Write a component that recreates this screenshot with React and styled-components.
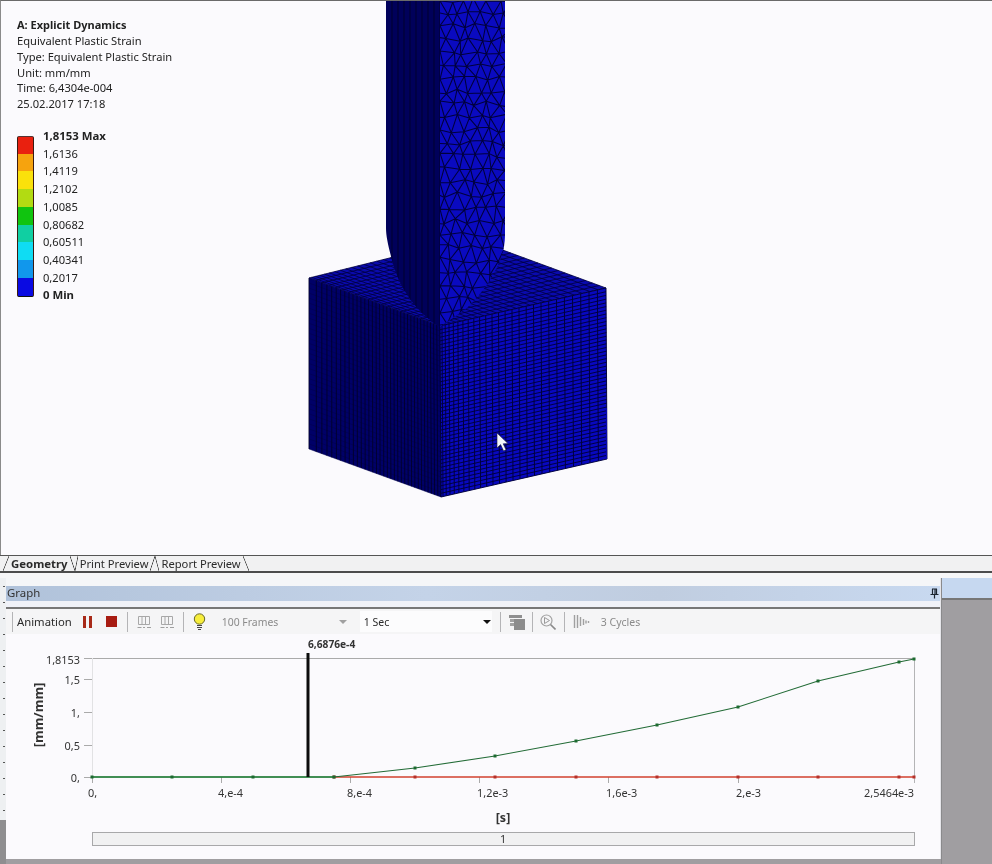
import React from "react";
import styled, { createGlobalStyle } from "styled-components";

const UI_FONT = `"Noto Sans", "Open Sans", sans-serif`;

const GlobalStyle = createGlobalStyle`
  html, body { margin: 0; padding: 0; background: #fbfafd; }
  body { font-family: ${UI_FONT}; }
`;

/* ---------- mesh geometry, in page pixels ---------- */

// small seeded random so the tri mesh stays the same on every load
const seeded = (s) => () => {
  s = (s * 16807) % 2147483647;
  return s / 2147483647;
};

const lerp = (a, b, t) => [a[0] + (b[0] - a[0]) * t, a[1] + (b[1] - a[1]) * t];
const pt = (p) => `${p[0].toFixed(1)} ${p[1].toFixed(1)}`;

// grid lines of a 4 corner face. us, vs are 0..1 stations
const faceGrid = (a, b, c, d, us, vs) => {
  let out = "";
  us.forEach((u) => {
    out += `M${pt(lerp(a, b, u))}L${pt(lerp(d, c, u))}`;
  });
  vs.forEach((v) => {
    out += `M${pt(lerp(a, d, v))}L${pt(lerp(b, c, v))}`;
  });
  return out;
};

const stations = (n, power) =>
  Array.from({ length: n + 1 }, (_, i) => Math.pow(i / n, power));

const TL = [309, 278];
const TB = [470, 238];
const TR = [606, 288];
const TF = [440, 326];
const BL = [309, 449];
const BF = [441, 497];
const BR = [607, 459];

const topLines = faceGrid(TF, TR, TB, TL, stations(26, 1.25), stations(20, 1));
const leftLines = faceGrid(TL, TF, BF, BL, stations(34, 0.82), []);
const leftRows = faceGrid(TL, TF, BF, BL, [], stations(34, 1));
const rightLines = faceGrid(TF, TR, BR, BF, stations(26, 1.35), stations(46, 1));

const rodLeftShape = "M386 1L440 1L440 327C425 318 401 296 392 260C388 245 386 236 386 228Z";
const rodRightShape = "M440 1L505 1L505 235C505 260 490 285 467 308L440 327Z";

const rodLeftLines = Array.from({ length: 9 }, (_, i) => {
  const x = 392 + i * 6;
  return `M${x} 1L${x} 330`;
}).join("");

const buildTriMesh = () => {
  const rnd = seeded(4711);
  const rows = [];
  for (let j = 0; j < 27; j++) {
    const row = [];
    for (let i = -1; i < 8; i++) {
      const shift = j % 2 ? 5.8 : 0;
      const pinned = i === 0 && j % 2 === 0;
      row.push([
        440 + i * 11.7 + shift + (pinned ? 0 : (rnd() - 0.5) * 5.5),
        j * 13 + (rnd() - 0.5) * 6,
      ]);
    }
    rows.push(row);
  }
  let d = "";
  rows.forEach((row, j) => {
    row.forEach((p, i) => {
      if (row[i + 1]) d += `M${pt(p)}L${pt(row[i + 1])}`;
      if (rows[j + 1]) {
        d += `M${pt(p)}L${pt(rows[j + 1][i])}`;
        const other = j % 2 ? rows[j + 1][i + 1] : rows[j + 1][i - 1];
        if (other) d += `M${pt(p)}L${pt(other)}`;
      }
    });
  });
  return d;
};

const triMesh = buildTriMesh();

/* ---------- chart data ---------- */

const xs = [92, 172, 253, 334, 415, 495, 576, 657, 738, 818, 899, 914];
const greenYs = [777, 777, 777, 777, 768, 756, 741, 725, 707, 681, 662, 659];
const greenPath = xs.map((x, i) => `${x},${greenYs[i]}`).join(" ");

const yTicks = [
  { label: "1,8153", y: 658 },
  { label: "1,5", y: 679 },
  { label: "1,", y: 712 },
  { label: "0,5", y: 745 },
  { label: "0,", y: 777 },
];

const xTicks = [
  { label: "0,", x: 92, from: 88 },
  { label: "4,e-4", x: 221, from: 218 },
  { label: "8,e-4", x: 350, from: 347 },
  { label: "1,2e-3", x: 479, from: 477 },
  { label: "1,6e-3", x: 608, from: 606 },
  { label: "2,e-3", x: 738, from: 736 },
];

const legend = [
  { color: "#e9200f", label: "1,8153 Max", strong: true },
  { color: "#f6a30e", label: "1,6136" },
  { color: "#fae10b", label: "1,4119" },
  { color: "#b2db12", label: "1,2102" },
  { color: "#10c40f", label: "1,0085" },
  { color: "#10cfa2", label: "0,80682" },
  { color: "#0fdcf3", label: "0,60511" },
  { color: "#1197ec", label: "0,40341" },
  { color: "#0a0ae2", label: "0,2017" },
  { label: "0 Min", strong: true },
];

/* ---------- page ---------- */

const Page = styled.div`
  width: 992px;
  height: 864px;
  display: flex;
  flex-direction: column;
  overflow: hidden;
  background: #fbfafd;
  color: #222;
  filter: blur(0.3px);
`;

const Viewport = styled.div`
  position: relative;
  height: 555px;
  box-sizing: border-box;
  flex: none;
  padding: 16px 0 0 16px;
  border-top: 1px solid #6a6a6a;
  border-left: 1px solid #8a8a8a;
`;

const MeshCanvas = styled.svg`
  position: absolute;
  left: -1px;
  top: -1px;
`;

const Cursor = styled.svg`
  position: absolute;
  left: 494px;
  top: 430px;
`;

const InfoLine = styled.div`
  font-size: ${(p) => (p.$strong ? 11 : 11.15)}px;
  line-height: 15.85px;
  font-weight: ${(p) => (p.$strong ? 700 : 400)};
  white-space: nowrap;
  position: relative;
`;

const Legend = styled.div`
  position: relative;
  display: grid;
  grid-template-columns: 17px auto;
  grid-auto-rows: 17.7px;
  column-gap: 9px;
  width: 110px;
  margin-top: 24px;
`;

const LegendLabel = styled.div`
  font-size: ${(p) => (p.$strong ? 11.4 : 11.15)}px;
  line-height: 17.7px;
  font-weight: ${(p) => (p.$strong ? 700 : 400)};
  white-space: nowrap;
  grid-column: 2;
  transform: translateY(-9px);
`;

const LegendSwatch = styled.div`
  grid-column: 1;
  background: ${(p) => p.$color};
  border-left: 1px solid #3a1a10;
  border-right: 1px solid #3a1a10;
  border-bottom: ${(p) => (p.$last ? "1px solid #111" : "none")};
  border-top: ${(p) => (p.$first ? "1px solid #533" : "none")};
  border-radius: ${(p) => (p.$first ? "2px 2px 0 0" : p.$last ? "0 0 2px 2px" : "0")};
  margin-bottom: ${(p) => (p.$last ? -2 : 0)}px;
`;

const LegendRow = styled.div`
  display: contents;
`;

/* tabs */

const TabStrip = styled.div`
  height: 18px;
  flex: none;
  box-sizing: border-box;
  display: flex;
  align-items: stretch;
  padding-left: 3px;
  background: #f1f1f2;
  border-top: 1px solid #555;
  border-bottom: 2px solid #4c4c4c;
`;

const TabSlash = styled.span`
  flex: none;
  width: ${(p) => p.$w}px;
  background: linear-gradient(
    ${(p) => (p.$back ? "to top right" : "to top left")},
    transparent calc(50% - 0.7px),
    #444 50%,
    transparent calc(50% + 0.7px)
  );
`;

const Tab = styled.span`
  font-size: ${(p) => (p.$active ? 11.4 : 11.2)}px;
  line-height: 15px;
  padding: 0 2px;
  font-weight: ${(p) => (p.$active ? 700 : 400)};
  color: #2a2a2a;
  white-space: nowrap;
`;

/* lower docked panel */

const Lower = styled.div`
  flex: 1;
  min-height: 0;
  display: flex;
  flex-direction: column;
`;

const Gap = styled.div`
  height: 5px;
  flex: none;
  background: #f6f6f7;
`;

const Dock = styled.div`
  flex: 1;
  display: flex;
  min-height: 0;
  background: #a09ea1;
`;

const Rail = styled.div`
  width: 6px;
  flex: none;
  background:
    repeating-linear-gradient(to bottom, #555 0 1px, transparent 1px 16px) 3px 8px / 2px 234px no-repeat,
    linear-gradient(to bottom, #eef0f2 0 242px, #8f8e90 242px);
`;

const GraphPanel = styled.div`
  width: 934px;
  height: 281px;
  flex: none;
  display: flex;
  flex-direction: column;
  background: #f7f7f9;
  border-right: 1px solid #e6e6ea;
`;

const TitleTop = styled.div`
  height: 8px;
  flex: none;
  background: #f5f6f8;
`;

const TitleBar = styled.div`
  height: 15px;
  flex: none;
  display: flex;
  align-items: center;
  justify-content: space-between;
  padding: 0 1px;
  background: linear-gradient(to right, #b0c2da 0%, #bccce2 25%, #c4d3e8 45%, #c0cde0 70%, #c8d9f0 100%);
  font-size: 11.4px;
  line-height: 13px;
  color: #333;
`;

const TitleLabel = styled.span`
  margin-top: -2px;
`;

const TitleUnder = styled.div`
  height: 6px;
  flex: none;
  background: #f0f2f8;
  border-bottom: 2px solid #777;
`;

const Toolbar = styled.div`
  height: 25px;
  flex: none;
  display: flex;
  align-items: center;
  background: #f5f5f6;
  font-size: 11.5px;
`;

const ToolSep = styled.span`
  flex: none;
  width: 1px;
  height: 20px;
  margin-left: ${(p) => p.$ml}px;
  background: #b4b4b6;
`;

const ToolText = styled.span`
  flex: none;
  margin-left: ${(p) => p.$ml}px;
  font-size: ${(p) => (p.$muted ? 10.5 : 11.3)}px;
  color: ${(p) => (p.$muted ? "#8a8a8a" : "#2a2a2a")};
  white-space: nowrap;
`;

const ToolIcon = styled.svg`
  flex: none;
  display: block;
  margin-left: ${(p) => p.$ml}px;
`;

const FramesBox = styled.div`
  flex: none;
  width: 130px;
  margin-left: 16px;
  display: flex;
  align-items: center;
  justify-content: space-between;
  padding-right: 5px;
  box-sizing: border-box;
  font-size: 10.4px;
  color: #8a8a8a;
`;

const SecBox = styled.div`
  flex: none;
  width: 132px;
  height: 21px;
  margin-left: 8px;
  padding: 0 1px 0 4px;
  box-sizing: border-box;
  display: flex;
  align-items: center;
  justify-content: space-between;
  background: #fcfcfd;
  font-size: 10.5px;
  color: #2a2a2a;
`;

const Caret = styled.span`
  width: 0;
  height: 0;
  border-left: 4px solid transparent;
  border-right: 4px solid transparent;
  border-top: 4px solid ${(p) => p.$color};
`;

const Chart = styled.svg`
  display: block;
  flex: none;
`;

const AxisText = styled.text`
  font-family: ${UI_FONT};
  font-size: ${(p) => p.$size || 10.9}px;
  fill: #333;
  font-weight: ${(p) => (p.$strong ? 700 : 400)};
`;

const SideColumn = styled.div`
  flex: 1;
  display: flex;
  flex-direction: column;
  border-left: 1px solid #8a8a8c;
`;

const SideBlue = styled.div`
  height: 20px;
  flex: none;
  background: #c6d8f0;
  border-bottom: 2px solid #777;
`;

const Mesh = () => (
  <MeshCanvas width="992" height="555" viewBox="0 0 992 555">
    <defs>
      <clipPath id="rodL"><path d={rodLeftShape} /></clipPath>
      <clipPath id="rodR"><path d={rodRightShape} /></clipPath>
    </defs>

    {/* block */}
    <polygon points={[TL, TB, TR, TF].map(pt).join(" ")} fill="#0a0aae" />
    <path d={topLines} stroke="#00003c" strokeWidth="0.8" fill="none" />

    <polygon points={[TL, TF, BF, BL].map(pt).join(" ")} fill="#000068" />
    <path d={leftRows} stroke="#00004a" strokeWidth="0.5" fill="none" />
    <path d={leftLines} stroke="#00002a" strokeWidth="0.9" fill="none" />

    <polygon points={[TF, TR, BR, BF].map(pt).join(" ")} fill="#0808c0" />
    <path d={rightLines} stroke="#00003a" strokeWidth="0.95" fill="none" />
    <rect x="606" y="408" width="1" height="51" fill="#0808a8" />

    {/* rod on top of the block */}
    <path d={rodLeftShape} fill="#00005a" />
    <path d={rodLeftLines} clipPath="url(#rodL)" stroke="#000032" strokeWidth="1.1" fill="none" />
    <path d={rodRightShape} fill="#0a0ac0" />
    <path d={triMesh} clipPath="url(#rodR)" stroke="#00003c" strokeWidth="1.05" fill="none" />
  </MeshCanvas>
);

const Pin = () => (
  <svg width="9" height="11" viewBox="0 0 9 11">
    <path d="M2 1h5M2.5 1v5.5M6.5 1v5.5M5 1v5.5M0.5 6.5h8M4.5 6.5v4" stroke="#1a2430" strokeWidth="1.2" fill="none" />
  </svg>
);

const TableGlyph = ({ ml }) => (
  <ToolIcon $ml={ml} width="15" height="15" viewBox="0 0 15 15">
    <path d="M1.5 2.5h11v8h-11zM5 2.5v8M8.5 2.5v8" fill="none" stroke="#a8a8a8" />
    <path d="M0.5 13.5h4M6 13.5h2M10 13.5h4" stroke="#a0a0a0" />
  </ToolIcon>
);

const GraphChart = () => (
  <Chart width="934" height="225" viewBox="6 634 934 225">
    <rect x="6" y="634" width="934" height="225" fill="#fbfafd" />

    {/* frame */}
    <line x1="84" y1="658.5" x2="914" y2="658.5" stroke="#aaa" />
    <line x1="92.5" y1="658" x2="92.5" y2="783" stroke="#e2e2e4" />
    <line x1="914.5" y1="658" x2="914.5" y2="783" stroke="#b4b4b6" />

    {yTicks.map((t) => (
      <g key={t.label}>
        <line x1="84" y1={t.y + 0.5} x2="92" y2={t.y + 0.5} stroke="#aaa" />
        <AxisText x="80" y={t.y + (t.y === 658 ? 6 : 5)} textAnchor="end">{t.label}</AxisText>
      </g>
    ))}

    {xTicks.map((t) => (
      <g key={t.label}>
        <line x1={t.x + 0.5} y1="777" x2={t.x + 0.5} y2="783" stroke="#aaa" />
        <AxisText x={t.from} y="797">{t.label}</AxisText>
      </g>
    ))}
    <AxisText x="914" y="797" textAnchor="end">2,5464e-3</AxisText>

    <AxisText $strong $size={12.5} x="503" y="822" textAnchor="middle">[s]</AxisText>
    <AxisText $strong $size={13} x="0" y="0" textAnchor="middle" transform="translate(43 715) rotate(-90)">[mm/mm]</AxisText>

    {/* series */}
    <line x1="334" y1="777" x2="914" y2="777" stroke="#d2402e" strokeWidth="1.3" />
    {xs.slice(3).map((x) => (
      <rect key={x} x={x - 1.5} y="775.5" width="3" height="3" fill="#b5302a" />
    ))}
    <line x1="92" y1="777" x2="334" y2="777" stroke="#2c9a44" strokeWidth="1.4" />
    <polyline points={greenPath} fill="none" stroke="#226b36" strokeWidth="1.1" />
    {xs.map((x, i) => (
      <rect key={x} x={x - 1.5} y={greenYs[i] - 1.5} width="3" height="3" fill="#1d6a30" />
    ))}

    {/* time cursor */}
    <rect x="306.5" y="653" width="3" height="124" fill="#0c0c0c" />
    <AxisText $strong $size={10.2} x="308" y="648">6,6876e-4</AxisText>

    {/* frame scrubber */}
    <rect x="92.5" y="832.5" width="822" height="13" fill="#f1f1f2" stroke="#a8a8aa" />
    <AxisText x="503" y="843" textAnchor="middle">1</AxisText>
  </Chart>
);

const App = () => (
  <Page>
    <GlobalStyle />
    <Viewport>
      <Mesh />
      <Cursor width="14" height="22" viewBox="0 0 14 22">
        <path d="M2 2L2 17L5.6 13.6L8.6 20L11 18.8L8.2 12.8L13 12.6Z" fill="#f4f6fa" stroke="#1a1a40" strokeWidth="0.6" />
      </Cursor>
      <InfoLine $strong>A: Explicit Dynamics</InfoLine>
      <InfoLine>Equivalent Plastic Strain</InfoLine>
      <InfoLine>Type: Equivalent Plastic Strain</InfoLine>
      <InfoLine>Unit: mm/mm</InfoLine>
      <InfoLine>Time: 6,4304e-004</InfoLine>
      <InfoLine>25.02.2017 17:18</InfoLine>
      <Legend>
        {legend.map((row, i) => (
          <LegendRow key={row.label}>
            {row.color ? <LegendSwatch $color={row.color} $first={i === 0} $last={i === 8} /> : <span />}
            <LegendLabel $strong={row.strong}>{row.label}</LegendLabel>
          </LegendRow>
        ))}
      </Legend>
    </Viewport>

    <TabStrip>
      <TabSlash $w={6} />
      <Tab $active>Geometry</Tab>
      <TabSlash $w={5} $back />
      <TabSlash $w={3} />
      <Tab>Print Preview</Tab>
      <TabSlash $w={5} />
      <TabSlash $w={4} $back />
      <Tab>Report Preview</Tab>
      <TabSlash $w={6} $back />
    </TabStrip>

    <Lower>
      <Gap />
      <Dock>
        <Rail />
        <GraphPanel>
          <TitleTop />
          <TitleBar>
            <TitleLabel>Graph</TitleLabel>
            <Pin />
          </TitleBar>
          <TitleUnder />
          <Toolbar>
            <ToolSep $ml={6} />
            <ToolText $ml={4}>Animation</ToolText>
            <ToolIcon $ml={11} width="9" height="12" viewBox="0 0 9 12">
              <path d="M0 0h3v12H0zM6 0h3v12H6z" fill="#a82a18" />
            </ToolIcon>
            <ToolIcon $ml={14} width="11" height="11" viewBox="0 0 11 11">
              <rect width="11" height="11" fill="#a81c12" />
            </ToolIcon>
            <ToolSep $ml={10} />
            <TableGlyph ml={9} />
            <TableGlyph ml={8} />
            <ToolSep $ml={8} />
            <ToolIcon $ml={9} width="13" height="17" viewBox="0 0 13 17">
              <circle cx="6.5" cy="6" r="5.2" fill="#f7ee3c" stroke="#6a6a2a" />
              <path d="M4 12h5v1H4zM4 14h5v1H4zM5 16h3v1H5z" fill="#444" />
            </ToolIcon>
            <FramesBox>
              <span>100 Frames</span>
              <Caret $color="#a0a0a0" />
            </FramesBox>
            <SecBox>
              <span>1 Sec</span>
              <Caret $color="#111" />
            </SecBox>
            <ToolSep $ml={8} />
            <ToolIcon $ml={8} width="16" height="16" viewBox="0 0 16 16">
              <path d="M0 1h13v3H0z" fill="#8f8f8f" />
              <path d="M1 5h4v3H1zM1 9h4v3H1z" fill="#a2a2a2" />
              <path d="M5 5h11v11H5z" fill="#8c8c8c" />
            </ToolIcon>
            <ToolSep $ml={7} />
            <ToolIcon $ml={7} width="16" height="16" viewBox="0 0 16 16">
              <circle cx="6.5" cy="6.5" r="5.5" fill="none" stroke="#a2a2a2" strokeWidth="1.2" />
              <path d="M4.5 3.5L9.5 6.5L4.5 9.5Z" fill="none" stroke="#9a9a9a" />
              <path d="M10.5 10.5L15.5 15.5" stroke="#8a8a8a" strokeWidth="1.6" />
            </ToolIcon>
            <ToolSep $ml={8} />
            <ToolIcon $ml={8} width="17" height="15" viewBox="0 0 17 15">
              <path d="M1.5 1v13M4.5 1v13M7.5 3v9M10.5 5v6M13 6.5v3M15.5 7v2" stroke="#a0a0a0" strokeWidth="1.4" />
            </ToolIcon>
            <ToolText $ml={11} $muted>3 Cycles</ToolText>
          </Toolbar>
          <GraphChart />
        </GraphPanel>
        <SideColumn>
          <SideBlue />
        </SideColumn>
      </Dock>
    </Lower>
  </Page>
);

export default App;
